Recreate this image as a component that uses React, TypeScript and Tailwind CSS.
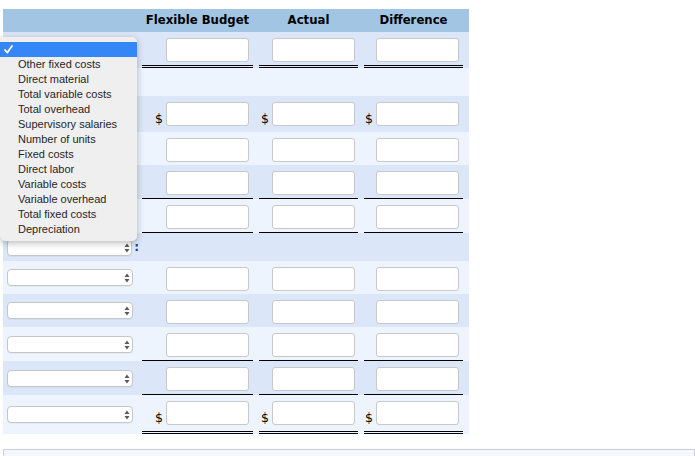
type Line = 'none' | 'single' | 'double'

interface Row {
  h: string
  dark: boolean
  line: Line
  inputs: boolean
  dollar?: boolean
  select?: boolean
  colon?: boolean
}

const rows: Row[] = [
  { h: 'h-[36px]', dark: true, line: 'double', inputs: true },
  { h: 'h-[28px]', dark: false, line: 'none', inputs: false },
  { h: 'h-[36px]', dark: true, line: 'none', inputs: true, dollar: true },
  { h: 'h-[33px]', dark: false, line: 'none', inputs: true },
  { h: 'h-[34px]', dark: true, line: 'single', inputs: true },
  { h: 'h-[34px]', dark: false, line: 'single', inputs: true },
  { h: 'h-[28px]', dark: true, line: 'none', inputs: false, select: true, colon: true },
  { h: 'h-[33px]', dark: false, line: 'none', inputs: true, select: true },
  { h: 'h-[33px]', dark: true, line: 'none', inputs: true, select: true },
  { h: 'h-[34px]', dark: false, line: 'single', inputs: true, select: true },
  { h: 'h-[34px]', dark: true, line: 'single', inputs: true, select: true },
  { h: 'h-[39px]', dark: false, line: 'double', inputs: true, dollar: true, select: true },
]

const options = [
  'Other fixed costs',
  'Direct material',
  'Total variable costs',
  'Total overhead',
  'Supervisory salaries',
  'Number of units',
  'Fixed costs',
  'Direct labor',
  'Variable costs',
  'Variable overhead',
  'Total fixed costs',
  'Depreciation',
]

// cell widths: outer / right padding of the input
const cols = [
  { w: 'w-[117px]', pr: 'pr-[4px]' },
  { w: 'w-[105px]', pr: 'pr-[3px]' },
  { w: 'w-[105px]', pr: 'pr-[4px]' },
]

function SelectBox() {
  return (
    <div className="relative w-[126px] h-[17px] bg-white border border-[#c6c6c6] rounded-[4px] shadow-[0_1px_0_rgba(0,0,0,0.04)]">
      <svg className="absolute left-[116px] top-[3px]" width="6" height="10" viewBox="0 0 6 10">
        <path d="M3 0.5 L5.5 4 L0.5 4 Z" fill="#5a5a5a" />
        <path d="M3 9.5 L5.5 6 L0.5 6 Z" fill="#5a5a5a" />
      </svg>
    </div>
  )
}

function Cell({ row, col }: { row: Row; col: (typeof cols)[number] }) {
  const border =
    row.line === 'double'
      ? 'border-b-[3px] border-double border-black'
      : row.line === 'single'
        ? 'border-b border-black'
        : ''
  return (
    <div className={`${col.w} h-full px-[3px]`}>
      <div className={`h-full flex justify-end items-start pt-[6px] ${col.pr} ${border}`}>
        {row.inputs && (
          <div className="flex items-end gap-[3px]">
            {row.dollar && (
              <span className="text-[12.5px] leading-none text-black mb-[1px]">$</span>
            )}
            <div className="w-[83px] h-[24px] bg-white border border-[#c8c8c8] rounded-[3px]" />
          </div>
        )}
      </div>
    </div>
  )
}

export default function App() {
  return (
    <div className="relative w-[695px] h-[456px] bg-white overflow-hidden font-['DejaVu_Sans',sans-serif]">
      <div className="pt-[9px] pl-[3px]">
        <div className="w-[466px]">
          <div className="flex h-[23px] bg-[#a1c5e3] items-center text-[11.7px] font-bold text-black">
            <div className="w-[136px]" />
            <div className="w-[117px] text-center">Flexible Budget</div>
            <div className="w-[105px] text-center">Actual</div>
            <div className="w-[105px] text-center">Difference</div>
          </div>
          {rows.map((row, i) => (
            <div
              key={i}
              className={`flex ${row.h} ${row.dark ? 'bg-[#dbe7f8]' : 'bg-[#edf4fd]'}`}
            >
              <div className="w-[136px] h-full flex items-center pl-[4px]">
                {row.select && <SelectBox />}
                {row.colon && (
                  <span className="ml-[2px] text-[12px] font-bold text-[#1f3f96] leading-none">:</span>
                )}
              </div>
              {cols.map((c, j) => (
                <Cell key={j} row={row} col={c} />
              ))}
            </div>
          ))}
        </div>
        <div className="mt-[15px] h-[12px] bg-[#f4f7fb] border border-[#cad0dc]" />
      </div>

      {/* open select popup */}
      <div className="absolute left-0 top-[37px] w-[137px] h-[204px] bg-[#efefef] rounded-r-[5px] rounded-bl-[5px] shadow-[0_2px_7px_rgba(0,0,0,0.28)] pt-[5px] font-['Liberation_Sans',sans-serif]">
        <div className="relative h-[15px] bg-[#3586f6]">
          <svg className="absolute left-[4px] top-[3px]" width="9" height="9" viewBox="0 0 9 9">
            <path d="M1 5 L3.4 7.6 L8 1" fill="none" stroke="white" strokeWidth="1.8" strokeLinecap="round" strokeLinejoin="round" />
          </svg>
        </div>
        {options.map((o) => (
          <div key={o} className="h-[15px] pl-[18px] text-[11px] leading-[15px] text-[#262626]">
            {o}
          </div>
        ))}
      </div>
    </div>
  )
}
